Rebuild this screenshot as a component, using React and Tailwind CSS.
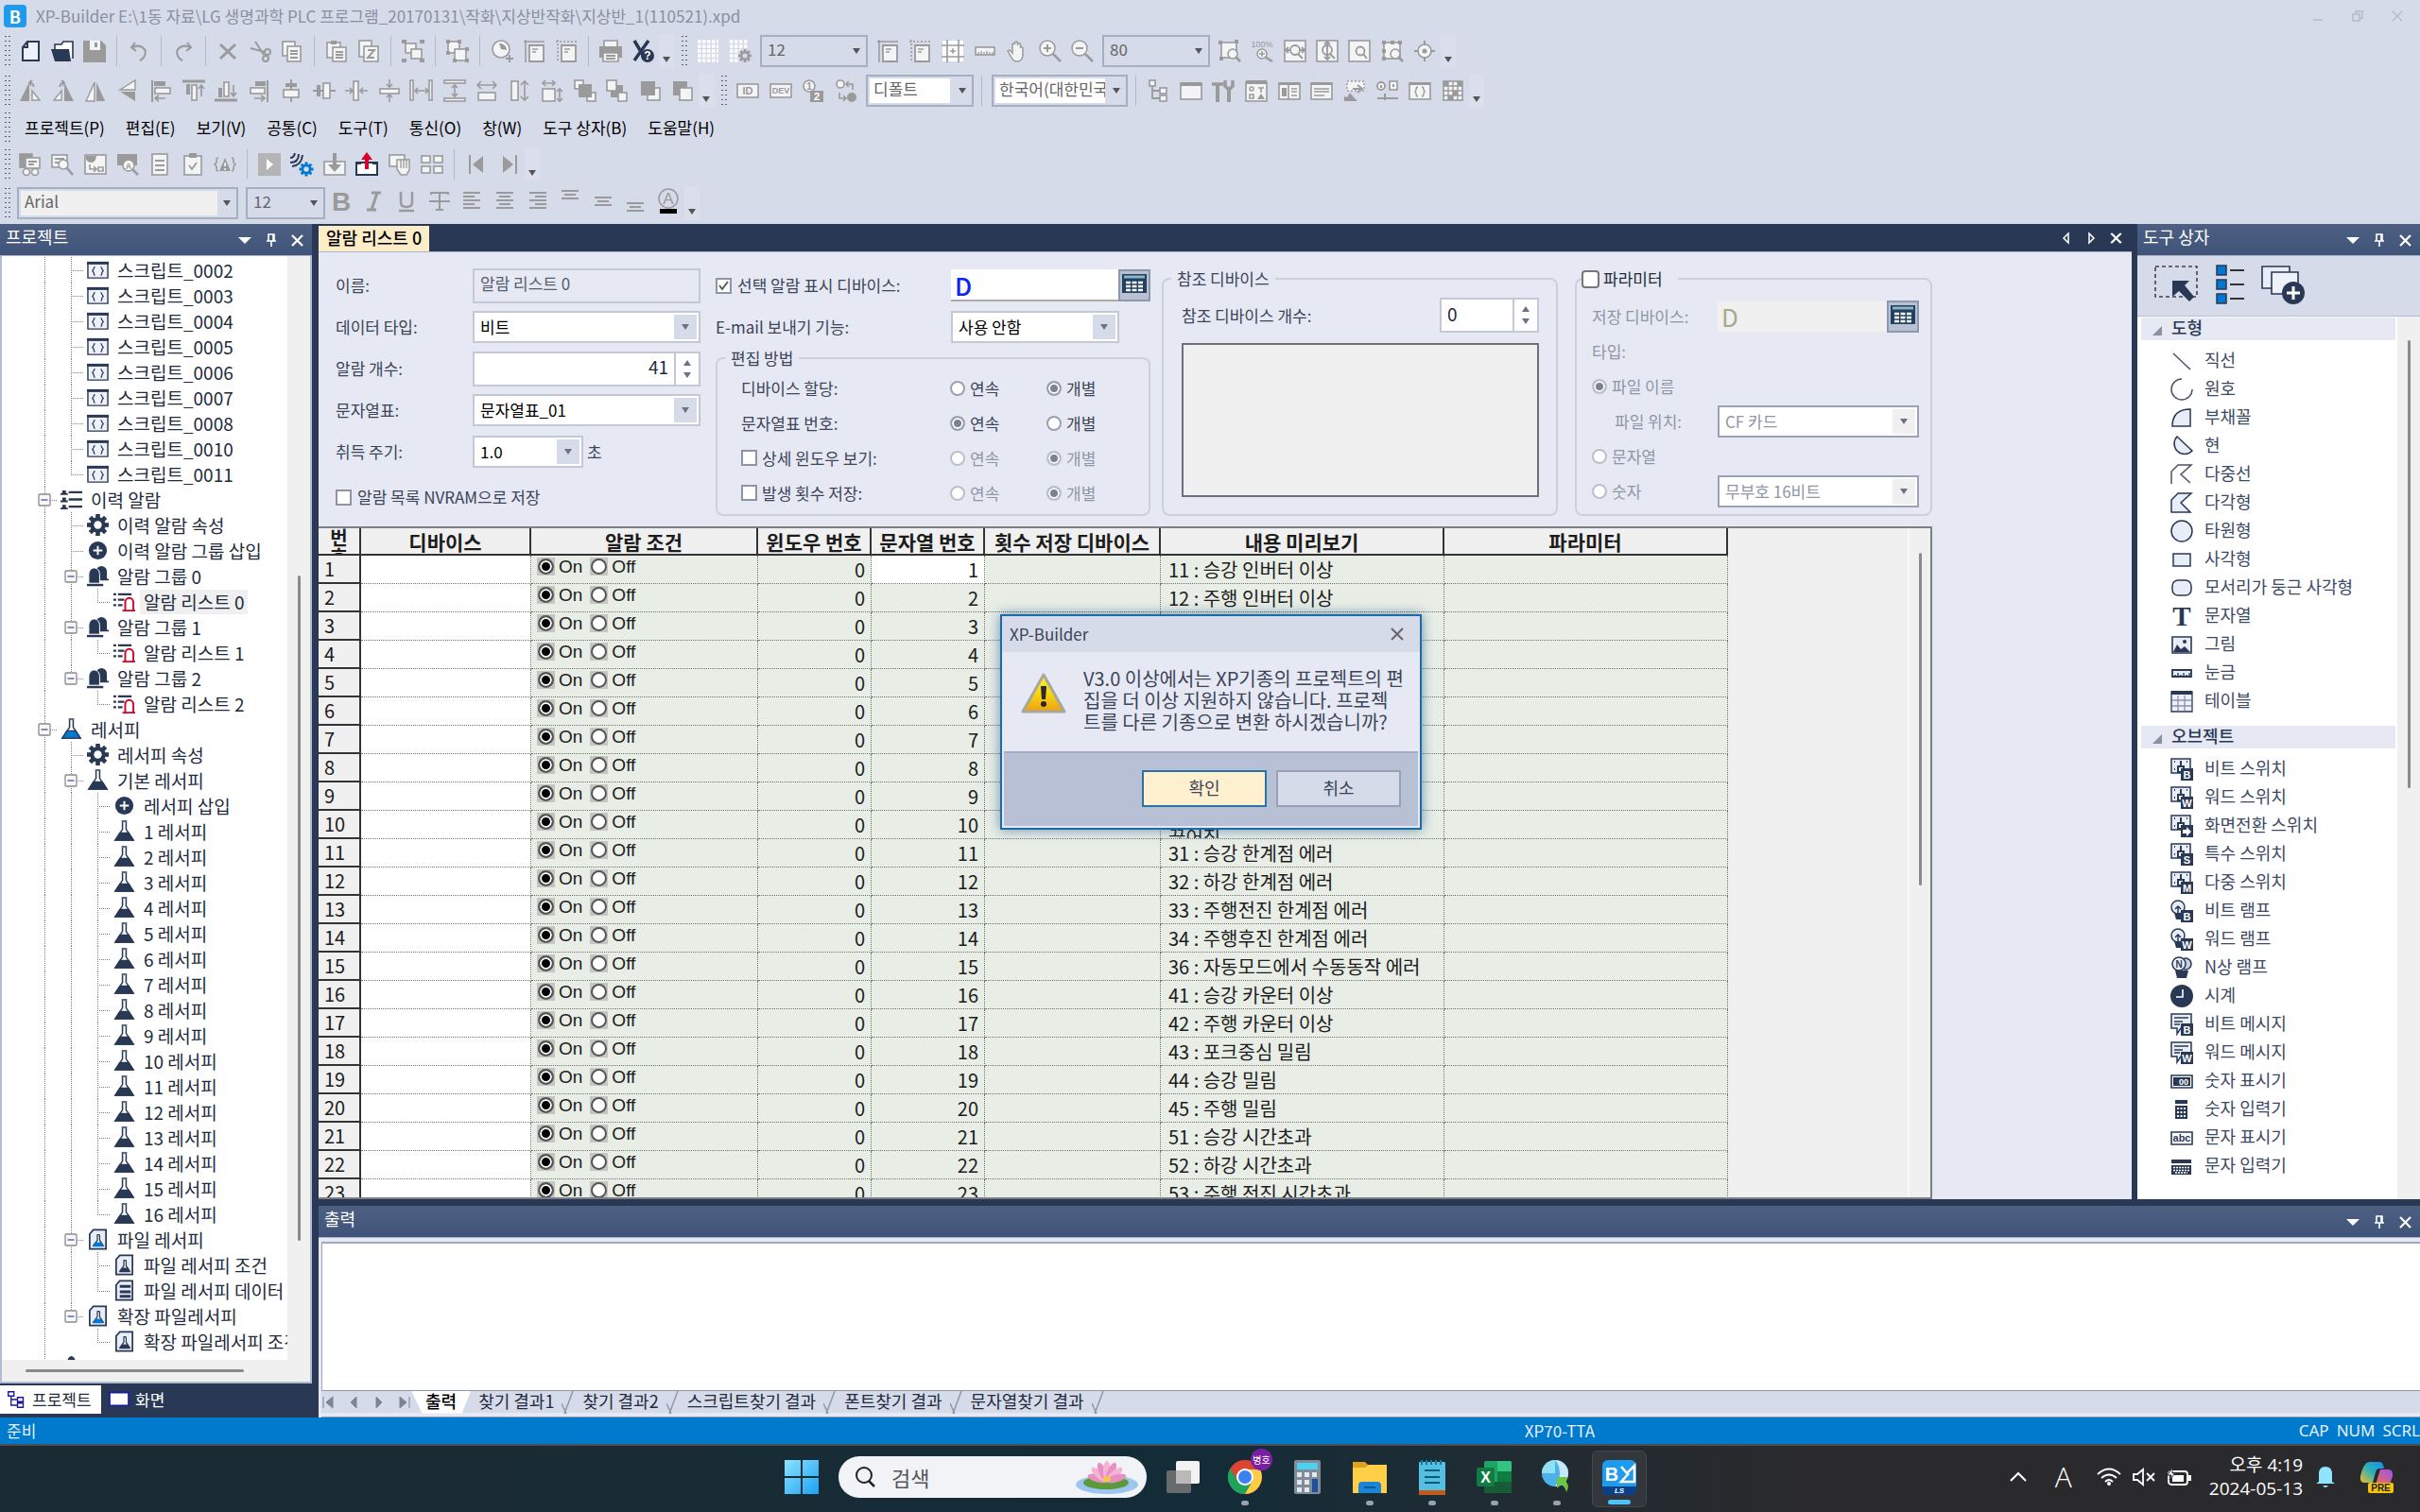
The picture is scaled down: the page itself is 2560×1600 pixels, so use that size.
import React, { useState } from "react";
import { clsx } from "clsx";

const GRAY = "#9a9a9a";
const NAVY = "#293955";
const PALE = "#f3f4f6";

/* ---------- icons ---------- */

const gear = (cx, cy, r, color, hole) => (
  <g>
    {[0, 45, 90, 135].map((a) => (
      <rect
        key={a}
        x={cx - r * 0.2}
        y={cy - r}
        width={r * 0.4}
        height={r * 2}
        fill={color}
        transform={`rotate(${a} ${cx} ${cy})`}
      />
    ))}
    <circle cx={cx} cy={cy} r={r * 0.72} fill={color} />
    <circle cx={cx} cy={cy} r={r * 0.36} fill={hole} />
  </g>
);

const badge = (letter) => (
  <g>
    <rect x="11" y="11" width="13" height="13" fill={NAVY} />
    <text x="17.5" y="22" fontSize="11" fontWeight="700" fill="#fff" textAnchor="middle" fontFamily="Liberation Sans, sans-serif">
      {letter}
    </text>
  </g>
);

const switchBox = (
  <g>
    <rect x="1" y="1" width="20" height="15" fill="#e9edf8" stroke={NAVY} strokeWidth="1.5" />
    <path d="M4 4h1M17 4h1M4 12h1" stroke={NAVY} strokeWidth="2" />
    <path d="M11 3v5M8 9h6v6H8z" stroke={NAVY} strokeWidth="2" fill="#fff" />
  </g>
);

const bulb = (
  <g>
    <circle cx="8" cy="8" r="7" fill="#e9edf8" stroke={NAVY} strokeWidth="1.5" />
    <path d="M8 14V8M5 10l3-3 3 3" stroke={NAVY} strokeWidth="1.5" fill="none" />
    <path d="M4 14h8v7H6z" fill={NAVY} />
  </g>
);

const message = (
  <g>
    <path d="M1 1h21v15H11l-4 6v-6H1z" fill="#e9edf8" stroke={NAVY} strokeWidth="1.5" />
    <path d="M4 5h15M4 9h9M4 12h6" stroke={NAVY} strokeWidth="1.5" />
  </g>
);

const flask = (liquid) => (
  <g>
    <path d="M9 1h6M10 2v8L2 22h20L14 10V2" fill="#fff" stroke={NAVY} strokeWidth="1.6" />
    <path d="M7 14h10l5 8H2z" fill={liquid} stroke={NAVY} strokeWidth="1.2" />
  </g>
);

const docFlask = (liquid) => (
  <g>
    <path d="M7 1.5h14v21H3V6z" fill="#e9edf8" stroke={NAVY} strokeWidth="1.8" />
    <path d="M11 7h3M11.5 7v6L7 19h11l-4-6V7" fill="#fff" stroke={NAVY} strokeWidth="1.3" />
    <path d="M9.5 15h6l3 5h-12z" fill={liquid} />
  </g>
);

const magnifier = (cx, cy, r) => (
  <g>
    <circle cx={cx} cy={cy} r={r} fill={PALE} stroke={GRAY} strokeWidth="1.5" />
    <path d={`M${cx + r * 0.7} ${cy + r * 0.7}L23 23`} stroke={GRAY} strokeWidth="2.5" />
  </g>
);

const rulerBox = (dash) => (
  <g fill="none" stroke={GRAY}>
    <path d="M1 2h22" strokeWidth="1.5" strokeDasharray={dash ? "2 2" : undefined} />
    <path d="M3 0v24" strokeWidth="1.5" strokeDasharray={dash ? "2 2" : undefined} />
    <path d="M7 6h15v17H7z" fill={PALE} strokeWidth="1.8" />
    <path d="M10 10h6M10 13h4" strokeWidth="1.5" />
  </g>
);

const box = (x, y, w, h, fill = PALE) => (
  <rect x={x} y={y} width={w} height={h} fill={fill} stroke={GRAY} strokeWidth="1.6" />
);

const strokes = (d, w = 1.6) => <path d={d} fill="none" stroke={GRAY} strokeWidth={w} />;

const lines = (rows) => (
  <path d={rows.map(([x, y, w]) => `M${x} ${y}h${w}`).join("")} stroke={GRAY} strokeWidth="2" />
);

const label = (t, x, y, size, fill = GRAY) => (
  <text x={x} y={y} fontSize={size} fontWeight="700" fill={fill} textAnchor="middle" fontFamily="Liberation Sans, sans-serif">
    {t}
  </text>
);

const ICONS = {
  new: <path d="M9 2h12v20H4V8z M9 2v6H4" fill="#eef1fa" stroke={NAVY} strokeWidth="2" />,
  open: (
    <g>
      <path d="M4 10V5h7l2-3h10v18" fill="#fff" stroke={NAVY} strokeWidth="1.6" />
      <path d="M0 10h19l2 13H4z" fill={NAVY} />
    </g>
  ),
  save: (
    <g>
      <path d="M0 1h19l5 5v18H0z" fill={GRAY} />
      <path d="M7 1h11v10H7z" fill={PALE} />
      <path d="M12 3h3v5h-3z" fill={GRAY} />
    </g>
  ),
  undo: strokes("M8 3L4 8l5 4M5 8c9-4 16 2 13 9-1 3-3 4-5 5", 2),
  redo: strokes("M16 3l4 5-5 4M19 8C10 4 3 10 6 17c1 3 3 4 5 5", 2),
  del: strokes("M4 5l16 15M20 5L4 20", 3),
  cut: (
    <g>
      {strokes("M7 2l9 14M2 9l15 4", 2)}
      <circle cx="18" cy="20" r="3" fill="none" stroke={GRAY} strokeWidth="2" />
      <circle cx="20" cy="13" r="3" fill="none" stroke={GRAY} strokeWidth="2" />
    </g>
  ),
  copy: (
    <g>
      {box(2, 2, 13, 15)}
      {box(7, 7, 14, 16)}
      {lines([[10, 12, 8], [10, 15, 8], [10, 19, 8]])}
    </g>
  ),
  paste: (
    <g>
      {box(2, 3, 14, 16)}
      <path d="M6 1h6v4H6z" fill={GRAY} />
      {box(8, 8, 14, 15)}
      {lines([[11, 13, 8], [11, 16, 8], [11, 19, 8]])}
    </g>
  ),
  pasteZ: (
    <g>
      {box(2, 1, 13, 17)}
      {box(7, 7, 15, 16)}
      {strokes("M11 11h7l-7 8h7", 2)}
    </g>
  ),
  group: (
    <g>
      {box(4, 4, 11, 10)}
      {box(10, 10, 11, 10)}
      <path d="M0 0h5v4H0zM19 0h5v4h-5zM0 20h5v4H0zM19 20h5v4h-5z" fill={GRAY} />
    </g>
  ),
  ungroup: (
    <g>
      {box(2, 2, 12, 12)}
      {box(9, 10, 12, 12)}
      <path d="M0 0h4v4H0zM12 0h4v4h-4zM0 12h4v4H0zM20 8h4v4h-4zM20 20h4v4h-4zM7 20h4v4H7z" fill={GRAY} />
    </g>
  ),
  find: (
    <g>
      <circle cx="11" cy="10" r="9" fill={PALE} stroke={GRAY} strokeWidth="1.6" />
      <path d="M11 10L9 4a7 7 0 0 1 8 7z" fill={GRAY} />
      {strokes("M20 16v8M16 20h8", 1.8)}
    </g>
  ),
  ruler1: rulerBox(false),
  ruler2: rulerBox(true),
  print: (
    <g>
      <path d="M5 1h14v7H5z" fill={PALE} stroke={GRAY} strokeWidth="1.6" />
      <path d="M0 7h24v12H0z" fill={GRAY} />
      <path d="M4 14h16v9H4z" fill={PALE} stroke={GRAY} strokeWidth="1.6" />
      {lines([[7, 17, 10], [7, 20, 10]])}
    </g>
  ),
  help: (
    <g>
      <path d="M3 1l12 20M18 1L3 22" stroke={NAVY} strokeWidth="3.5" />
      <circle cx="17" cy="17" r="7" fill={NAVY} />
      {label("?", 17, 21, 12, "#fff")}
    </g>
  ),
  grid: (
    <path d="M1 2h22M1 7h22M1 12h22M1 17h22M1 22h22" stroke="#fff" strokeWidth="3.5" strokeDasharray="3.5 1.5" />
  ),
  gridGear: (
    <g>
      <path d="M1 2h20M1 7h20M1 12h12M1 17h9M1 22h9" stroke="#fff" strokeWidth="3.5" strokeDasharray="3.5 1.5" />
      {gear(17, 17, 7, GRAY, "#d6dbe9")}
    </g>
  ),
  guide: (
    <g>
      <path d="M1 1h22v22H1z" fill="#fff" />
      {strokes("M0 6h24M0 18h24M6 0v24M18 0v24")}
      {strokes("M12 9v6M9 12h6", 1.4)}
    </g>
  ),
  rule: (
    <g>
      {box(2, 8, 20, 8)}
      {strokes("M5 16v-3M8 16v-4M11 16v-3M14 16v-4M17 16v-3M20 16v-3", 1.3)}
    </g>
  ),
  hand: (
    <path
      d="M7 14V5q1.5-2 2.5 0V3q1.5-2 3 0v2q2-2 3 0v3q2-1 2.5 1v8q-1 6-6 6-4 0-6-4l-4-7q2-2 5 2z"
      fill={PALE}
      stroke={GRAY}
      strokeWidth="1.5"
    />
  ),
  zoomIn: (
    <g>
      {magnifier(9, 9, 8)}
      {strokes("M9 5v8M5 9h8", 2)}
    </g>
  ),
  zoomOut: (
    <g>
      {magnifier(9, 9, 8)}
      {strokes("M5 9h8", 2)}
    </g>
  ),
  zoomBox: (
    <g>
      {box(3, 3, 16, 16)}
      <path d="M0 1h4v4H0zM17 0h4v4h-4zM1 18h4v4H1z" fill={GRAY} />
      {magnifier(15, 15, 5)}
    </g>
  ),
  zoom100: (
    <g>
      <text x="12" y="8" fontSize="9" fill={GRAY} textAnchor="middle" fontFamily="Liberation Sans, sans-serif">
        100%
      </text>
      {magnifier(12, 15, 5)}
      {strokes("M12 12v6M9 15h6", 1.5)}
    </g>
  ),
  fitW: (
    <g>
      {box(1, 1, 22, 22)}
      <circle cx="12" cy="11" r="5" fill="none" stroke={GRAY} strokeWidth="1.8" />
      {strokes("M15 15l5 5M2 11h6M16 11h6M5 8l-3 3 3 3M19 8l3 3-3 3", 1.8)}
    </g>
  ),
  fitH: (
    <g>
      {box(1, 1, 22, 22)}
      <circle cx="12" cy="11" r="5" fill="none" stroke={GRAY} strokeWidth="1.8" />
      {strokes("M15 15l5 5M12 2v18M9 5l3-3 3 3M9 18l3 3 3-3", 1.8)}
    </g>
  ),
  page: (
    <g>
      {box(1, 1, 22, 22)}
      <circle cx="13" cy="12" r="4.5" fill="none" stroke={GRAY} strokeWidth="1.8" />
      {strokes("M16 15l4 5", 2)}
    </g>
  ),
  selZoom: (
    <g>
      {box(3, 3, 17, 17)}
      <path d="M1 1h4v4H1zM10 1h4v4h-4zM18 1h4v4h-4zM1 10h4v4H1zM1 18h4v4H1z" fill={GRAY} />
      {magnifier(15, 15, 5)}
    </g>
  ),
  target: (
    <g>
      <circle cx="12" cy="12" r="7" fill={PALE} stroke={GRAY} strokeWidth="1.6" />
      <circle cx="12" cy="12" r="2.5" fill={GRAY} />
      {strokes("M12 1v5M12 18v5M1 12h5M18 12h5", 2)}
    </g>
  ),
  rotL: (
    <g>
      <path d="M11 3v20H1z" fill={GRAY} />
      <path d="M14 12v10h8z" fill={PALE} stroke={GRAY} strokeWidth="1.4" />
      {strokes("M16 8q-1-4-4-5M14 1l-3 2 2 4")}
    </g>
  ),
  rotR: (
    <g>
      <path d="M13 3v20h10z" fill={GRAY} />
      <path d="M10 12v10H2z" fill={PALE} stroke={GRAY} strokeWidth="1.4" />
      {strokes("M8 8q1-4 4-5M10 1l3 2-2 4")}
    </g>
  ),
  flipH: (
    <g>
      <path d="M11 3v20H2z" fill={PALE} stroke={GRAY} strokeWidth="1.4" />
      <path d="M13 3v20h9z" fill={GRAY} />
    </g>
  ),
  flipV: (
    <g>
      <path d="M19 1v10H3z" fill={PALE} stroke={GRAY} strokeWidth="1.4" />
      <path d="M19 13v10L3 13z" fill={GRAY} />
    </g>
  ),
  alignL: (
    <g>
      {strokes("M3 1v23", 2)}
      <path d="M5 2h12v5H5z" fill={GRAY} />
      {box(6, 9, 16, 6)}
      {strokes("M6 20h11M10 17l-4 3 4 3")}
    </g>
  ),
  alignT: (
    <g>
      {strokes("M0 2h24", 3)}
      <path d="M4 5h4v11H4z" fill={GRAY} />
      {box(10, 6, 5, 16)}
      {strokes("M20 6v12M17 10l3-4 3 4")}
    </g>
  ),
  alignB: (
    <g>
      {strokes("M0 22h24", 3)}
      <path d="M4 9h4v10H4z" fill={GRAY} />
      {box(10, 3, 5, 15)}
      {strokes("M20 6v12M17 14l3 4 3-4")}
    </g>
  ),
  alignR: (
    <g>
      {strokes("M21 1v23", 2)}
      <path d="M8 2h11v5H8z" fill={GRAY} />
      {box(3, 9, 15, 6)}
      {strokes("M7 20h11M14 17l4 3-4 3")}
    </g>
  ),
  midH: (
    <g>
      {strokes("M12 0v24", 2)}
      <path d="M6 4h12v4H6z" fill={GRAY} />
      {box(4, 11, 16, 8)}
    </g>
  ),
  midV: (
    <g>
      {strokes("M0 12h24", 2)}
      <path d="M4 6h4v12H4z" fill={GRAY} />
      {box(11, 4, 7, 16)}
    </g>
  ),
  inH: (
    <g>
      {box(9, 2, 5, 20)}
      {strokes("M0 12h8M5 9l3 3-3 3M24 12h-8M19 9l-3 3 3 3")}
    </g>
  ),
  inV: (
    <g>
      {box(2, 10, 20, 5)}
      {strokes("M12 0v8M9 5l3 3 3-3M12 24v-8M9 19l3-3 3 3")}
    </g>
  ),
  distH: (
    <g>
      {box(0, 1, 3, 21)}
      {box(20, 1, 3, 21)}
      {strokes("M5 12h13M8 9l-3 3 3 3M16 9l3 3-3 3")}
    </g>
  ),
  distV: (
    <g>
      {box(1, 1, 22, 3)}
      {box(1, 20, 22, 3)}
      {strokes("M12 6v12M9 9l3-3 3 3M9 15l3 3 3-3")}
    </g>
  ),
  sameW: (
    <g>
      {box(3, 14, 18, 8)}
      {strokes("M2 6h20M6 2L2 6l4 4M18 2l4 4-4 4")}
    </g>
  ),
  sameH: (
    <g>
      {box(3, 2, 7, 20)}
      {strokes("M17 2v20M13 6l4-4 4 4M13 18l4 4 4-4")}
    </g>
  ),
  sameSize: (
    <g>
      {box(2, 10, 13, 13)}
      {strokes("M2 4h13M5 1L2 4l3 3M12 1l3 3-3 3M20 10v13M17 13l3-3 3 3M17 20l3 3 3-3")}
    </g>
  ),
  front: (
    <g>
      {box(1, 1, 9, 9)}
      {box(14, 14, 9, 9)}
      <path d="M5 5h14v14H5z" fill={GRAY} />
    </g>
  ),
  back: (
    <g>
      <path d="M5 6h13v13H5z" fill={GRAY} />
      {box(1, 1, 10, 11)}
      {box(13, 14, 9, 9)}
    </g>
  ),
  forward: (
    <g>
      {box(9, 9, 13, 13)}
      <path d="M2 2h15v15H2z" fill={GRAY} />
    </g>
  ),
  backward: (
    <g>
      <path d="M2 2h15v15H2z" fill={GRAY} />
      {box(9, 9, 13, 13)}
    </g>
  ),
  id: (
    <g>
      {box(1, 5, 22, 14)}
      {label("ID", 12, 16, 11)}
    </g>
  ),
  dev: (
    <g>
      {box(1, 5, 22, 14)}
      {label("DEV", 12, 15, 9)}
    </g>
  ),
  oneTwo: (
    <g>
      <circle cx="8" cy="7" r="6" fill={PALE} stroke={GRAY} strokeWidth="1.6" />
      {label("1", 8, 11, 10)}
      <path d="M9 12h14v12H9z" fill={GRAY} />
      {label("2", 16, 22, 11, "#fff")}
    </g>
  ),
  swap: (
    <g>
      <circle cx="6" cy="5" r="4" fill={PALE} stroke={GRAY} strokeWidth="1.6" />
      <circle cx="18" cy="19" r="5" fill={GRAY} />
      {strokes("M13 5h6v6M15 2l-3 3 3 3M5 14v6h6M9 17l3 3-3 3")}
    </g>
  ),
  tree: (
    <g>
      {strokes("M6 6v14h8M6 12h8", 1.8)}
      {box(3, 1, 6, 6)}
      {box(14, 9, 7, 6)}
      {box(14, 17, 7, 6)}
    </g>
  ),
  window: (
    <g>
      {box(1, 4, 22, 17)}
      <path d="M1 3h22v4H1z" fill={GRAY} />
    </g>
  ),
  tools: (
    <g>
      {strokes("M6 6v18M18 12v12", 4)}
      {strokes("M0 5h12M14 1v6l4 4 4-4V1", 3.5)}
    </g>
  ),
  shapes: (
    <g>
      {box(1, 3, 22, 20)}
      <path d="M1 1h22v4H1z" fill={GRAY} />
      <circle cx="7" cy="10" r="2" fill="none" stroke={GRAY} strokeWidth="1.5" />
      {strokes("M14 9h6M17 9v5M5 16h4v4H5z")}
      <path d="M17 15l4 6h-8z" fill={GRAY} />
    </g>
  ),
  props: (
    <g>
      {box(1, 4, 22, 17)}
      <path d="M1 3h22v3H1zM4 9h5v9H4z" fill={GRAY} />
      {strokes("M11 5v16M14 10h6M14 13h6M14 17h6")}
    </g>
  ),
  text: (
    <g>
      {box(1, 4, 22, 17)}
      <path d="M1 3h22v3H1z" fill={GRAY} />
      {strokes("M4 10h16M4 13h16M4 17h11")}
    </g>
  ),
  imgOut: (
    <g>
      <path d="M4 2h18v10H4z" fill={PALE} stroke={GRAY} strokeDasharray="2 2" strokeWidth="1.5" />
      <path d="M1 23v-5l3 1 3-5 4 5 4 4z" fill={GRAY} />
      {strokes("M10 10h8M15 6l5 4-5 4", 2)}
    </g>
  ),
  link: (
    <g>
      <circle cx="5" cy="7" r="4" fill={PALE} stroke={GRAY} strokeWidth="1.8" />
      {box(14, 2, 8, 9)}
      {strokes("M1 20h22M9 15v7M18 5v3M5 6v3", 2)}
    </g>
  ),
  braces: (
    <g>
      {box(1, 4, 22, 17)}
      <path d="M1 3h22v3H1z" fill={GRAY} />
      {strokes("M10 8q-2 0-2 3l-1 2 1 2q0 3 2 3M14 8q2 0 2 3l1 2-1 2q0 3-2 3", 1.4)}
    </g>
  ),
  matrix: (
    <g>
      {box(2, 2, 20, 20)}
      {strokes("M2 7h20M2 12h20M2 17h20M7 2v20M12 2v20M17 2v20", 1.4)}
      <path d="M2 2h5v5H2zM17 2h5v5h-5zM12 12h5v5h-5zM7 17h5v5H7z" fill={GRAY} />
    </g>
  ),
  winFind: (
    <g>
      {box(1, 1, 13, 14, GRAY)}
      {box(7, 5, 15, 11)}
      {lines([[10, 9, 9], [10, 12, 6]])}
      <circle cx="8" cy="20" r="3.5" fill={PALE} stroke={GRAY} strokeWidth="1.6" />
      <circle cx="17" cy="20" r="3.5" fill={PALE} stroke={GRAY} strokeWidth="1.6" />
    </g>
  ),
  listFind: (
    <g>
      {box(1, 2, 16, 13)}
      {lines([[4, 6, 10], [4, 10, 6]])}
      {magnifier(13, 12, 5)}
    </g>
  ),
  preview: (
    <g>
      {box(1, 2, 22, 20)}
      <path d="M2 3h11q-1 7-5 7-5 0-6-4z" fill={GRAY} />
      {strokes("M6 12v5h6M10 14l3 3-3 3M15 15h5v4h-5z", 1.6)}
    </g>
  ),
  textFind: (
    <g>
      <path d="M1 1h21v12H1z" fill={GRAY} />
      {magnifier(13, 13, 6)}
      {label("A", 13, 17, 9)}
    </g>
  ),
  doc: (
    <g>
      {box(4, 1, 16, 22)}
      {lines([[7, 8, 10], [7, 13, 10], [7, 18, 10]])}
    </g>
  ),
  check: (
    <g>
      {box(3, 3, 18, 20)}
      <path d="M8 0h8v5H8z" fill={GRAY} />
      {strokes("M8 13l3 4 5-7", 1.8)}
    </g>
  ),
  warn: (
    <g>
      {strokes("M5 5q-2 0-2 3v2l-2 2 2 2v2q0 3 2 3M19 5q2 0 2 3v2l2 2-2 2v2q0 3-2 3")}
      <path d="M12 5l6 14H6z" fill={GRAY} />
      <path d="M12 10v4M12 16v2" stroke="#fff" strokeWidth="1.5" />
    </g>
  ),
  play: (
    <g>
      <path d="M0 0h24v24H0z" fill="#b4b4b4" />
      <path d="M9 6l7 6-7 6z" fill="#fff" />
    </g>
  ),
  comm: (
    <g>
      <path d="M0 5q4 0 5-5M0 10q9 0 9-9M2 14q10-1 11-12" stroke={NAVY} strokeWidth="2" fill="none" />
      {gear(17, 17, 7.5, "#0078d0", "#d6dbe9")}
    </g>
  ),
  down: (
    <g>
      {box(1, 9, 22, 14)}
      <path d="M10 0h4v12h5l-7 8-7-8h5z" fill={GRAY} />
    </g>
  ),
  up: (
    <g>
      <path d="M1 10h22v13H1z" fill="#fff" stroke={NAVY} strokeWidth="2" />
      <path d="M0 9h6v3H0zM18 9h6v3h-6z" fill={NAVY} />
      <path d="M10 17h4V7h4l-6-8-6 8h4z" fill="#d8002a" />
    </g>
  ),
  cards: (
    <g>
      {box(1, 2, 16, 12)}
      <path d="M9 7h13v11l-3 5h-6l-4-6z" fill={PALE} stroke={GRAY} strokeWidth="1.5" />
      {strokes("M13 7v9M16 7v9M19 7v9", 1.3)}
    </g>
  ),
  tiles: (
    <g>
      {box(1, 3, 9, 7)}
      {box(14, 3, 9, 7)}
      {box(1, 14, 9, 7)}
      {box(14, 14, 9, 7)}
    </g>
  ),
  first: (
    <g>
      {strokes("M5 2v20", 2)}
      <path d="M19 3v18L8 12z" fill={GRAY} />
    </g>
  ),
  last: (
    <g>
      {strokes("M20 2v20", 2)}
      <path d="M6 3v18l11-9z" fill={GRAY} />
    </g>
  ),
  bold: label("B", 12, 22, 28),
  italic: strokes("M9 3h10M4 21h10M15 3L9 21", 3),
  underline: strokes("M6 2v11q0 5 6 5t6-5V2M4 22h16", 2.5),
  strike: strokes("M3 5V3h18v2M12 3v18M8 21h8M1 12h22", 2),
  textL: lines([[3, 3, 18], [3, 7, 12], [3, 11, 18], [3, 15, 12], [3, 19, 18]]),
  textC: lines([[3, 3, 18], [6, 7, 12], [3, 11, 18], [6, 15, 12], [3, 19, 18]]),
  textR: lines([[3, 3, 18], [9, 7, 12], [3, 11, 18], [9, 15, 12], [3, 19, 18]]),
  textT: lines([[3, 1, 18], [6, 5, 12], [3, 9, 18]]),
  textM: lines([[3, 8, 18], [6, 12, 12], [3, 16, 18]]),
  textB: lines([[3, 14, 18], [6, 18, 12], [3, 22, 18]]),
  color: (
    <g>
      <circle cx="12" cy="9" r="10" fill="none" stroke={GRAY} strokeWidth="1.5" />
      <text x="12" y="15" fontSize="17" fill={GRAY} textAnchor="middle" fontFamily="Liberation Sans, sans-serif">
        A
      </text>
      <path d="M3 20h18v5H3z" fill="#000" />
    </g>
  ),

  /* tree icons */
  script: (
    <g>
      <path d="M1 5h22v16H1z" fill="#eef1fa" stroke={NAVY} strokeWidth="1.5" />
      <path d="M0 3h24v3H0z" fill={NAVY} />
      <path d="M9 9q-1.5 0-1.5 2L6 13l1.5 2q0 3 1.500 3M15 9q1.500 0 1.500 2l1.500 2-1.500 2q0 3-1.500 3" fill="none" stroke={NAVY} strokeWidth="1.3" />
    </g>
  ),
  history: (
    <g>
      <path d="M9 4h15M9 12h15M9 20h15" stroke={NAVY} strokeWidth="2.5" />
      <path d="M2 2h4v3H2zM0 5h8v2H0zM2 10h4v3H2zM0 13h8v2H0zM2 18h4v3H2zM0 21h8v2H0z" fill={NAVY} />
    </g>
  ),
  gear: gear(12, 12, 12, NAVY, "#fff"),
  plus: (
    <g>
      <circle cx="12" cy="12" r="10" fill={NAVY} />
      <path d="M12 7v10M7 12h10" stroke="#fff" strokeWidth="2" />
    </g>
  ),
  bell: (
    <g>
      <path d="M10 17V7a6 6 0 0 1 12 0v8h2v2z" fill={NAVY} />
      <path d="M2 20V10a6 7 0 0 1 12 0v10z" fill={NAVY} stroke="#fff" strokeWidth="1" />
      <path d="M0 22h18" stroke={NAVY} strokeWidth="2.5" />
    </g>
  ),
  alarm: (
    <g>
      <path d="M0 4h3M0 10h3M0 16h3M5 4h15M5 10h7M5 16h5" stroke={NAVY} strokeWidth="2.5" />
      <path d="M13 22v-9a4.500 5 0 0 1 9 0v9M10 22h14" fill="#fff" stroke="#d8002a" strokeWidth="2" />
    </g>
  ),
  flaskBlue: flask("#0078d0"),
  flask: flask(NAVY),
  docBlue: docFlask("#0078d0"),
  docNavy: docFlask(NAVY),
  docData: (
    <g>
      <path d="M7 1.5h14v21H3V6z" fill="#e9edf8" stroke={NAVY} strokeWidth="1.8" />
      <path d="M7 6h12v3H7zM7 12h12v3H7zM7 17h12v3H7z" fill={NAVY} />
    </g>
  ),
  tip: <path d="M8 3q4-6 8 0v14H8z" fill={NAVY} />,
  treeNavy: (
    <g fill="#fff" stroke="#1b1b8f" strokeWidth="1.8">
      <path d="M5 6v14h9M5 12h9" fill="none" />
      <path d="M1 1h8v6H1zM14 9h8v6h-8zM14 17h8v6h-8z" />
    </g>
  ),
  screen: <path d="M1 4h22v15H1z" fill="#fff" stroke="#1b1bb0" strokeWidth="2" />,

  /* toolbox shapes */
  line: <path d="M3 4l18 17" stroke="#4a5468" strokeWidth="1.5" />,
  arc: <path d="M12 1a11 11 0 1 0 11 11" fill="none" stroke="#4a5468" strokeWidth="1.5" />,
  fan: <path d="M21 3v18H2Q2 3 21 3z" fill="#e9edf8" stroke={NAVY} strokeWidth="1.5" />,
  chord: <path d="M7 2l16 15A10 10 0 1 1 7 2z" fill="#e9edf8" stroke={NAVY} strokeWidth="1.5" />,
  poly: <path d="M1 22V9l7-7h14L11 12l10 9" fill="none" stroke="#4a5468" strokeWidth="1.5" />,
  polygon: <path d="M1 22V9l7-7h14L11 12l10 10z" fill="#e9edf8" stroke={NAVY} strokeWidth="1.5" />,
  ellipse: <circle cx="12" cy="12" r="11" fill="#e9edf8" stroke={NAVY} strokeWidth="1.5" />,
  rect: <path d="M3 6h18v13H3z" fill="#e9edf8" stroke={NAVY} strokeWidth="1.5" />,
  round: <rect x="2" y="4" width="20" height="16" rx="6" fill="#e9edf8" stroke={NAVY} strokeWidth="1.5" />,
  letterT: (
    <text x="12" y="22" fontSize="29" fontWeight="700" fill={NAVY} textAnchor="middle" fontFamily="Liberation Serif, serif">
      T
    </text>
  ),
  picture: (
    <g>
      <path d="M2 4h20v17H2z" fill="#e9edf8" stroke={NAVY} strokeWidth="1.6" />
      <path d="M3 20l4-8 4 5 4-3 6 6z" fill={NAVY} />
      <circle cx="15" cy="9" r="2" fill={NAVY} />
    </g>
  ),
  scale: (
    <g>
      <path d="M2 9h20v7H2z" fill="#e9edf8" stroke={NAVY} strokeWidth="1.8" />
      <path d="M5 16v-2M8 16v-4M11 16v-2M14 16v-4M17 16v-2M20 16v-4" stroke={NAVY} strokeWidth="1.3" />
    </g>
  ),
  table: (
    <g>
      <path d="M1 2h22v21H1z" fill="#eef1fa" stroke={NAVY} strokeWidth="1.3" />
      <path d="M1 1h22v4H1z" fill={NAVY} />
      <path d="M2 11h20M2 17h20M8 6v16M15 6v16" stroke="#8a93a8" strokeWidth="1.3" />
    </g>
  ),
  swB: <g>{switchBox}{badge("B")}</g>,
  swW: <g>{switchBox}{badge("W")}</g>,
  swArrow: (
    <g>
      {switchBox}
      <path d="M11 11h13v13H11z" fill={NAVY} />
      <path d="M13 16h4v-3l5 5-5 5v-3h-4z" fill="#fff" />
    </g>
  ),
  swS: <g>{switchBox}{badge("S")}</g>,
  swM: <g>{switchBox}{badge("M")}</g>,
  lampB: <g>{bulb}{badge("B")}</g>,
  lampW: <g>{bulb}{badge("W")}</g>,
  lampN: (
    <g>
      <circle cx="16" cy="8" r="6" fill="#c9cfde" stroke={NAVY} strokeWidth="1.5" />
      <circle cx="9" cy="8" r="7" fill="#e9edf8" stroke={NAVY} strokeWidth="1.5" />
      {label("N", 9, 12, 10, NAVY)}
      <path d="M5 15h14l-2 8H7z" fill={NAVY} />
    </g>
  ),
  clock: (
    <g>
      <circle cx="12" cy="12" r="12" fill={NAVY} />
      <path d="M13 5v8H6" stroke="#fff" strokeWidth="1.6" fill="none" />
    </g>
  ),
  msgB: <g>{message}{badge("B")}</g>,
  msgW: <g>{message}{badge("W")}</g>,
  numShow: (
    <g>
      <path d="M1 6h22v13H1z" fill="#fff" stroke={NAVY} strokeWidth="1.6" />
      <path d="M3 8h18v9H3z" fill={NAVY} />
      {label("00", 14, 16, 9, "#fff")}
    </g>
  ),
  numInput: (
    <g>
      <path d="M5 2h13v4H5zM5 8h13v14H5z" fill={NAVY} />
      <path d="M7 11h9M7 15h9M7 19h9" stroke="#fff" strokeWidth="2" strokeDasharray="2 1.5" />
    </g>
  ),
  chrShow: (
    <g>
      <path d="M1 6h22v13H1z" fill="#fff" stroke={NAVY} strokeWidth="1.6" />
      {label("abc", 12, 16, 11, NAVY)}
    </g>
  ),
  chrInput: (
    <g>
      <path d="M1 5h21v4H1zM1 11h21v10H1z" fill={NAVY} />
      <path d="M3 13.5h17M3 16.5h17M5 19h13" stroke="#fff" strokeWidth="1.5" strokeDasharray="2 1" />
    </g>
  ),
};

function Icon({ name, className = "size-6" }) {
  return (
    <svg viewBox="0 0 24 24" className={clsx("shrink-0 overflow-visible", className)} aria-hidden="true">
      {ICONS[name]}
    </svg>
  );
}

/* ---------- toolbars ---------- */

function Grip() {
  return (
    <div className="w-2 h-9 mr-1 shrink-0 bg-[radial-gradient(circle,#5c6370_1px,transparent_1px)] bg-[size:4px_5px]" />
  );
}

function Sep() {
  return <div className="w-px h-8 mx-1.5 shrink-0 bg-[#b3bacb]" />;
}

function Tools({ names, className }) {
  return (
    <div className={clsx("flex shrink-0 justify-between", className)}>
      {names.map((n, i) => (
        <button key={i} type="button" aria-label={n} className="w-[34px] h-9 flex items-center justify-center">
          <Icon name={n} />
        </button>
      ))}
    </div>
  );
}

function More() {
  return (
    <button type="button" aria-label="more" className="w-4 h-9 flex items-end justify-center pb-1.5 shrink-0 bg-[#dbdfec]">
      <Triangle className="text-[#555]" />
    </button>
  );
}

function Triangle({ className, up }) {
  return (
    <svg viewBox="0 0 8 6" className={clsx("w-2 h-1.5 shrink-0", up && "rotate-180", className)} aria-hidden="true">
      <path d="M0 0h8L4 6z" fill="currentColor" />
    </svg>
  );
}

function BarCombo({ name, value, className, white }) {
  return (
    <div className={clsx("relative h-[34px] shrink-0 border-2 border-[#a5afc4] p-0.5", className)}>
      <select
        aria-label={name}
        defaultValue={value}
        className={clsx("appearance-none block h-full pl-1 pb-1 text-[17px] leading-5 text-[#666] outline-none", white || "w-full")}
      >
        <option>{value}</option>
      </select>
      <Triangle className="absolute right-1.5 top-3 text-[#555]" />
    </div>
  );
}

const MENUS = ["프로젝트(P)", "편집(E)", "보기(V)", "공통(C)", "도구(T)", "통신(O)", "창(W)", "도구 상자(B)", "도움말(H)"];

function TopBars() {
  return (
    <header className="bg-[#d6dbe9] shrink-0 pb-px">
      <div className="h-[33px] flex items-center px-1 gap-[10px]">
        <div className="size-6 rounded bg-[#1d9bec] text-white font-bold text-lg leading-6 text-center">B</div>
        <h1 className="flex-1 text-[17px] leading-8 text-[#8990a2] whitespace-pre">
          XP-Builder E:\1동 자료\LG 생명과학 PLC 프로그램_20170131\작화\지상반작화\지상반_1(110521).xpd
        </h1>
        <div className="flex gap-[26px] pr-3 text-[#b4bbca]">
          <WinButton label="minimize" d="M3 12h10" />
          <WinButton label="restore" d="M3 6h7v7H3zM6 6V3h7v7h-3" />
          <WinButton label="close" d="M3 3l10 10M13 3L3 13" />
        </div>
      </div>
      <div className="h-[42px] flex items-center pl-1">
        <Grip />
        <Tools names={["new", "open", "save"]} className="w-[102px] -ml-px" />
        <Sep />
        <Tools names={["undo"]} />
        <Sep />
        <Tools names={["redo"]} />
        <Sep />
        <Tools names={["del", "cut", "copy"]} />
        <Sep />
        <Tools names={["paste", "pasteZ"]} />
        <Sep />
        <Tools names={["group"]} />
        <Sep />
        <Tools names={["ungroup"]} />
        <Sep />
        <Tools names={["find", "ruler1", "ruler2"]} />
        <Sep />
        <Tools names={["print", "help"]} />
        <More />
        <div className="w-[7px]" />
        <Grip />
        <Tools names={["grid", "gridGear"]} />
        <BarCombo name="grid size" value="12" className="w-[114px] ml-1" />
        <Tools names={["ruler1", "ruler2", "guide", "rule", "hand", "zoomIn", "zoomOut"]} className="w-[240px] mx-1" />
        <BarCombo name="zoom" value="80" className="w-[114px]" />
        <Tools names={["zoomBox", "zoom100", "fitW", "fitH", "page", "selZoom", "target"]} className="w-[240px] ml-1" />
        <More />
      </div>
      <div className="h-[42px] flex items-center pl-1">
        <Grip />
        <Tools
          className="w-[724px] -ml-px"
          names={[
            "rotL", "rotR", "flipH", "flipV", "alignL", "alignT", "alignB", "alignR", "midH", "midV", "inH",
            "inV", "distH", "distV", "sameW", "sameH", "sameSize", "front", "back", "forward", "backward",
          ]}
        />
        <More />
        <div className="w-[7px]" />
        <Grip />
        <Tools names={["id", "dev", "oneTwo", "swap"]} className="w-[138px]" />
        <BarCombo name="style" value="디폴트" className="w-[114px] ml-1" white="w-[85px] bg-white" />
        <div className="w-px h-8 ml-2 mr-[10px] shrink-0 bg-[#b3bacb]" />
        <BarCombo name="language" value="한국어(대한민국)" className="w-[144px]" white="w-[116px] bg-white" />
        <div className="w-px h-8 ml-2 mr-1.5 shrink-0 bg-[#b3bacb]" />
        <Tools
          className="w-[346px]"
          names={["tree", "window", "tools", "shapes", "props", "text", "imgOut", "link", "braces", "matrix"]}
        />
        <More />
      </div>
      <nav className="h-9 flex items-center pl-1">
        <Grip />
        <div className="flex gap-[22px] pl-2.5">
          {MENUS.map((m) => (
            <button key={m} type="button" className="text-[17px] leading-6 text-black">
              {m}
            </button>
          ))}
        </div>
      </nav>
      <div className="h-[41px] flex items-center pl-1">
        <Grip />
        <Tools names={["winFind", "listFind", "preview", "textFind", "doc", "check", "warn"]} className="w-[240px] -ml-px" />
        <Sep />
        <Tools names={["play", "comm", "down", "up", "cards", "tiles"]} className="w-[206px]" />
        <Sep />
        <Tools names={["first", "last"]} />
        <More />
      </div>
      <div className="h-[42px] flex items-center pl-1">
        <Grip />
        <BarCombo name="font" value="Arial" className="w-[234px] ml-0.5" white="w-[208px] bg-[#f0f0f0]" />
        <BarCombo name="font size" value="12" className="w-[84px] ml-2" />
        <Tools
          className="w-[380px] mb-1"
          names={["bold", "italic", "underline", "strike", "textL", "textC", "textR", "textT", "textM", "textB", "color"]}
        />
        <More />
      </div>
    </header>
  );
}

function WinButton({ label, d }) {
  return (
    <button type="button" aria-label={label}>
      <svg viewBox="0 0 16 16" className="size-4">
        <path d={d} fill="none" stroke="currentColor" strokeWidth="1.5" />
      </svg>
    </button>
  );
}

/* ---------- docked panels ---------- */

function PanelHeader({ title }) {
  return (
    <div className="h-[34px] shrink-0 flex items-center pl-1.5 pr-2 bg-linear-to-b from-[#4d6082] to-[#40547a] border-b border-[#aab4cb] text-white">
      <h2 className="flex-1 text-[18px] leading-6 pb-2">{title}</h2>
      <div className="flex items-center gap-[14px]">
        <button type="button" aria-label="menu">
          <svg viewBox="0 0 14 14" className="w-[14px]">
            <path d="M0 4h14L7 11z" fill="currentColor" />
          </svg>
        </button>
        <button type="button" aria-label="pin">
          <svg viewBox="0 0 14 14" className="w-[14px]">
            <path d="M4 1h6v7H4zM2 8h10M7 8v6M9 1v7" fill="none" stroke="currentColor" strokeWidth="1.6" />
          </svg>
        </button>
        <button type="button" aria-label="close">
          <svg viewBox="0 0 14 14" className="w-[14px]">
            <path d="M1 2l11 11M12 2L1 13" stroke="currentColor" strokeWidth="2.2" />
          </svg>
        </button>
      </div>
    </div>
  );
}

// cells: v = trunk, t = branch, l = last branch, m / n = the same with a minus box, _ = blank
const TREE = [
  ...["02", "03", "04", "05", "06", "07", "08", "10"].map((n) => ["vt", "script", `스크립트_00${n}`]),
  ["vl", "script", "스크립트_0011"],
  ["m", "history", "이력 알람"],
  ["vt", "gear", "이력 알람 속성"],
  ["vt", "plus", "이력 알람 그룹 삽입"],
  ["vm", "bell", "알람 그룹 0"],
  ["vvl", "alarm", "알람 리스트 0", true],
  ["vm", "bell", "알람 그룹 1"],
  ["vvl", "alarm", "알람 리스트 1"],
  ["vn", "bell", "알람 그룹 2"],
  ["v_l", "alarm", "알람 리스트 2"],
  ["m", "flaskBlue", "레서피"],
  ["vt", "gear", "레서피 속성"],
  ["vm", "flask", "기본 레서피"],
  ["vvt", "plus", "레서피 삽입"],
  ...Array.from({ length: 15 }, (_, i) => ["vvt", "flask", `${i + 1} 레서피`]),
  ["vvl", "flask", "16 레서피"],
  ["vm", "docBlue", "파일 레서피"],
  ["vvt", "docNavy", "파일 레서피 조건"],
  ["vvl", "docData", "파일 레서피 데이터"],
  ["vn", "docBlue", "확장 파일레서피"],
  ["v_l", "docNavy", "확장 파일레서피 조건"],
  ["v", "tip", ""],
];

function TreeCell({ kind }) {
  const end = kind === "l" || kind === "n" ? 14 : 27;
  const boxed = kind === "m" || kind === "n";
  return (
    <svg viewBox="0 0 28 27" className="w-7 h-[27px] shrink-0" aria-hidden="true">
      {kind !== "_" && (
        <path d={`M14.5 0V${end}`} stroke="#7c7c7c" strokeDasharray="1 1" />
      )}
      {kind !== "_" && kind !== "v" && <path d="M14 14.5h14" stroke="#7c7c7c" strokeDasharray="1 1" />}
      {boxed && (
        <g>
          <rect x="8" y="8" width="12" height="12" rx="1" fill="#f8f8f8" stroke="#8a8a8a" strokeWidth="1.3" />
          <path d="M10.5 14h7" stroke="#3f55a0" strokeWidth="1.3" />
        </g>
      )}
    </svg>
  );
}

function ProjectPanel() {
  return (
    <aside className="w-[330px] shrink-0 flex flex-col bg-[#293955]">
      <PanelHeader title="프로젝트" />
      <div className="flex-1 min-h-0 flex flex-col border-x-2 border-b-2 border-[#b4bccf] bg-[#f0f0f0]">
        <div className="flex-1 min-h-0 flex">
          <ul className="flex-1 min-w-0 h-full overflow-hidden bg-white pt-px">
            {TREE.map(([cells, icon, text, selected], i) => (
              <li key={i} className="flex items-center h-[27px] pl-[31px]">
                {cells.split("").map((c, k) => (
                  <TreeCell key={k} kind={c} />
                ))}
                <span className="w-7 flex justify-center shrink-0">
                  <Icon name={icon} className="size-[23px]" />
                </span>
                <span
                  className={clsx(
                    "ml-[3px] px-1 text-[19px] leading-[26px] text-[#222b3d] whitespace-nowrap",
                    selected && "bg-[#f0f0f0]"
                  )}
                >
                  {text}
                </span>
              </li>
            ))}
          </ul>
          <div className="w-6 flex flex-col items-center">
            <div className="h-[338px] shrink-0" />
            <div className="w-[3px] h-[704px] rounded bg-[#8a8a8a]" />
          </div>
        </div>
        <div className="h-[23px] flex items-center pl-[25px]">
          <div className="w-[231px] h-[3px] rounded bg-[#8a8a8a]" />
        </div>
      </div>
      <div className="flex h-9 pb-1 pt-0.5 shrink-0">
        <button type="button" className="w-[107px] flex items-center gap-2 pl-2 bg-white text-[17px] leading-6 text-[#222b3d]">
          <Icon name="treeNavy" className="size-[18px]" />
          프로젝트
        </button>
        <button type="button" className="flex items-center gap-1.5 pl-2 text-[17px] leading-6 text-white">
          <Icon name="screen" className="size-[22px]" />
          화면
        </button>
      </div>
    </aside>
  );
}

/* ---------- alarm form ---------- */

const FIELD = "border-2 border-[#c3c8d6] bg-white outline-none";
const LABEL = "text-[17px] leading-[22px] text-[#3b4458] whitespace-nowrap";
const DIM = "text-[17px] leading-[22px] text-[#8f96a6] whitespace-nowrap";

function Select({ id, value, className, disabled }) {
  return (
    <div className={clsx("relative h-[34px] shrink-0", className)}>
      <select
        id={id}
        defaultValue={value}
        disabled={disabled}
        className={clsx(
          "appearance-none w-full h-full px-1.5 text-[17px] leading-6 outline-none bg-white",
          disabled ? "border-2 border-[#9aa3b5] text-[#8f96a6] opacity-100" : "border-2 border-[#c3c8d6] text-black"
        )}
      >
        <option>{value}</option>
      </select>
      <span
        className={clsx(
          "absolute right-1 inset-y-1 w-6 flex items-center justify-center pointer-events-none text-[#6b7280]",
          disabled ? "bg-[#f0f0f0]" : "bg-[#d6dbe9]"
        )}
      >
        <Triangle />
      </span>
    </div>
  );
}

function Spin({ id, value, className, align }) {
  return (
    <div className={clsx("flex h-[37px] min-w-0", FIELD, className)}>
      <input
        id={id}
        defaultValue={value}
        className={clsx("flex-1 min-w-0 px-1.5 pb-1 text-[19px] leading-6 text-[#222b3d] outline-none", align)}
      />
      <div className="w-[26px] flex flex-col items-center justify-evenly border-l-2 border-[#c3c8d6] text-[#6b7280]">
        <Triangle up />
        <Triangle />
      </div>
    </div>
  );
}

function Check({ text, checked, className = "gap-1.5" }) {
  const [on, setOn] = useState(!!checked);
  return (
    <label className={clsx("flex items-center", className, LABEL)}>
      <span className="relative size-[17px] shrink-0">
        <input
          type="checkbox"
          checked={on}
          onChange={() => setOn(!on)}
          className="appearance-none block size-full border-2 border-[#8d94a3] bg-white"
        />
        {on && (
          <svg viewBox="0 0 17 17" className="absolute inset-0 size-full pointer-events-none">
            <path d="M4 8l3 4 6-8" fill="none" stroke="#555" strokeWidth="1.8" />
          </svg>
        )}
      </span>
      {text}
    </label>
  );
}

function Radio({ name, text, checked, disabled, className }) {
  return (
    <label className={clsx("flex items-center gap-[5px]", className, disabled ? DIM : LABEL)}>
      <input
        type="radio"
        name={name}
        defaultChecked={checked}
        disabled={disabled}
        className={clsx(
          "appearance-none size-4 rounded-full border-2 bg-white checked:bg-[#7a8294] checked:shadow-[inset_0_0_0_2px_#fff]",
          disabled ? "border-[#b9bfcc]" : "border-[#9aa0ad]"
        )}
      />
      {text}
    </label>
  );
}

function Keypad() {
  return (
    <button type="button" aria-label="keypad" className="w-[34px] h-[34px] shrink-0 flex items-center justify-center border-2 border-[#8d97ad] bg-[#b9c1d2]">
      <svg viewBox="0 0 26 26" className="size-[26px]">
        <path d="M0 1h26v20H0z" fill="#1f4260" />
        <path d="M2 4h22" stroke="#8fb3c8" strokeWidth="3" />
        <path d="M4 10h18M4 14h18M4 18h18" stroke="#fff" strokeWidth="2.5" strokeDasharray="5 1.5" />
      </svg>
    </button>
  );
}

const EDIT_ROWS = [
  { text: "디바이스 할당:", first: false },
  { text: "문자열표 번호:", first: true },
  { text: "상세 윈도우 보기:", check: true, disabled: true },
  { text: "발생 횟수 저장:", check: true, disabled: true },
];

function Group({ legend, className, children }) {
  return (
    <fieldset className={clsx("rounded-lg border-2 border-[#cbd0dc]", className)}>
      <legend className="h-[22px] flex items-center">{legend}</legend>
      {children}
    </fieldset>
  );
}

function Row({ id, text, children }) {
  return (
    <div className="h-11 flex items-center">
      <label htmlFor={id} className={clsx(LABEL, "w-[145px] shrink-0")}>
        {text}
      </label>
      {children}
    </div>
  );
}

function AlarmForm() {
  return (
    <form className="flex pl-[18px] pt-[13px] pb-[5px]" onSubmit={(e) => e.preventDefault()}>
      <div className="w-[386px] mr-4">
        <Row id="name" text="이름:">
          <input
            id="name"
            readOnly
            value="알람 리스트 0"
            className="flex-1 min-w-0 h-[37px] pb-1.5 px-1.5 border-2 border-[#c3c8d6] bg-[#e6e9f3] text-[17px] leading-6 text-[#555d70] outline-none"
          />
        </Row>
        <Row id="type" text="데이터 타입:">
          <Select id="type" value="비트" className="flex-1" />
        </Row>
        <Row id="count" text="알람 개수:">
          <Spin id="count" value="41" className="flex-1" align="text-right" />
        </Row>
        <Row id="strings" text="문자열표:">
          <Select id="strings" value="문자열표_01" className="flex-1" />
        </Row>
        <Row id="period" text="취득 주기:">
          <Select id="period" value="1.0" className="w-[117px]" />
          <span className={clsx(LABEL, "ml-1")}>초</span>
        </Row>
        <div className="h-[52px] flex items-center">
          <Check text="알람 목록 NVRAM으로 저장" />
        </div>
      </div>

      <div className="w-[460px] mr-3">
        <div className="h-11 flex items-center">
          <Check text="선택 알람 표시 디바이스:" checked className="w-[249px] gap-1.5" />
          <input
            aria-label="device"
            defaultValue="D"
            className="w-[177px] h-[34px] px-1 bg-white border-b-2 border-[#aaa] text-[26px] leading-8 font-medium text-[#0a24f0] outline-none"
          />
          <Keypad />
        </div>
        <div className="h-11 flex items-center">
          <label htmlFor="mail" className={clsx(LABEL, "w-[249px]")}>E-mail 보내기 기능:</label>
          <Select id="mail" value="사용 안함" className="w-[178px]" />
        </div>
        <Group legend={<span className={clsx(LABEL, "px-1.5")}>편집 방법</span>} className="pl-2 pt-0.5 pb-1">
          {EDIT_ROWS.map((r) => (
            <div key={r.text} className="h-[37px] flex items-center pl-[17px]">
              <div className="w-[221px]">
                {r.check ? <Check text={r.text} className="gap-[5px]" /> : <span className={LABEL}>{r.text}</span>}
              </div>
              <Radio name={r.text} text="연속" checked={r.first} disabled={r.disabled} className="w-[102px]" />
              <Radio name={r.text} text="개별" checked={!r.first} disabled={r.disabled} />
            </div>
          ))}
        </Group>
      </div>

      <Group
        legend={<span className={clsx(LABEL, "px-1.5")}>참조 디바이스</span>}
        className="w-[419px] mr-[18px] mt-1 mb-1.5 px-2"
      >
        <div className="mt-[9px] ml-[11px] mr-[10px] flex items-center justify-between">
          <label htmlFor="refs" className={LABEL}>참조 디바이스 개수:</label>
          <Spin id="refs" value="0" className="w-[105px]" />
        </div>
        <div className="mt-[11px] ml-[11px] mr-[10px] h-[163px] border-2 border-[#6d7078] bg-[#f0f0f0]" />
      </Group>

      <Group
        legend={
          <label className="flex items-center gap-1 pr-4 -ml-[11px] text-[17px] leading-[22px] text-[#222b3d]">
            <input type="checkbox" className="appearance-none size-[19px] rounded border-2 border-[#767676] bg-white" />
            파라미터
          </label>
        }
        className="w-[377px] mt-1 mb-1.5 pl-4 pr-3"
      >
        <div className="h-[37px] mt-[10px] flex items-center">
          <label htmlFor="save" className={clsx(DIM, "w-[133px]")}>저장 디바이스:</label>
          <input
            id="save"
            disabled
            defaultValue="D"
            className="w-[179px] h-8 px-1 bg-[#f0f0f0] text-[26px] leading-8 text-[#aaa88c]"
          />
          <Keypad />
        </div>
        <div className={clsx(DIM, "h-[37px] flex items-center")}>타입:</div>
        <div className="h-[37px] flex items-center">
          <Radio name="param" text="파일 이름" checked disabled />
        </div>
        <div className="h-[37px] flex items-center">
          <label htmlFor="where" className={clsx(DIM, "w-[133px] pl-6")}>파일 위치:</label>
          <Select id="where" value="CF 카드" disabled className="flex-1" />
        </div>
        <div className="h-[37px] flex items-center">
          <Radio name="param" text="문자열" disabled />
        </div>
        <div className="h-[37px] flex items-center">
          <Radio name="param" text="숫자" disabled className="w-[133px]" />
          <Select id="number" value="무부호 16비트" disabled className="flex-1" />
        </div>
      </Group>
    </form>
  );
}

/* ---------- alarm table ---------- */

const PREVIEWS = [
  "11 : 승강 인버터 이상",
  "12 : 주행 인버터 이상",
  "", "", "", "", "", "", "",
  "끊어짐",
  "31 : 승강 한계점 에러",
  "32 : 하강 한계점 에러",
  "33 : 주행전진 한계점 에러",
  "34 : 주행후진 한계점 에러",
  "36 : 자동모드에서 수동동작 에러",
  "41 : 승강 카운터 이상",
  "42 : 주행 카운터 이상",
  "43 : 포크중심 밀림",
  "44 : 승강 밀림",
  "45 : 주행 밀림",
  "51 : 승강 시간초과",
  "52 : 하강 시간초과",
  "53 : 주행 전진 시간초과",
];

const HEADS = ["디바이스", "알람 조건", "윈도우 번호", "문자열 번호", "횟수 저장 디바이스", "내용 미리보기", "파라미터"];

const CELL = "border-r border-b border-dotted border-[#6d736d] bg-[#e8ede6] px-1.5";

const COND_RADIO =
  "appearance-none block size-[17px] rounded-full border-2 border-[#555] bg-white checked:bg-black checked:shadow-[inset_0_0_0_2px_#fff]";

function OnOff({ row }) {
  return (
    <div className="flex items-center pb-1.5 font-['Liberation_Sans',sans-serif] text-[19px] leading-[22px]">
      <label className="flex items-center gap-1 mr-2">
        <span className="bg-[#c4c6c2] p-px">
          <input type="radio" name={`cond${row}`} defaultChecked className={COND_RADIO} />
        </span>
        On
      </label>
      <label className="flex items-center gap-1">
        <span className="bg-[#c4c6c2] p-px">
          <input type="radio" name={`cond${row}`} className={COND_RADIO} />
        </span>
        Off
      </label>
    </div>
  );
}

function AlarmTable() {
  return (
    <div className="flex-1 min-h-0 flex border-2 border-l-0 border-[#7b7e84] bg-[#f0f0f0] overflow-hidden">
      <table className="w-[1491px] table-fixed border-separate border-spacing-0 text-[20px] leading-[22px] text-[#1c1c1c] self-start">
        <colgroup>
          <col className="w-[45px]" />
          <col className="w-[180px]" />
          <col className="w-[240px]" />
          <col className="w-[120px]" />
          <col className="w-[120px]" />
          <col className="w-[186px]" />
          <col className="w-[300px]" />
          <col className="w-[300px]" />
        </colgroup>
        <thead>
          <tr>
            <th className="p-0 border-r-2 border-b-2 border-[#333]">
              <div className="h-[27px] overflow-hidden leading-[20px] px-2">번호</div>
            </th>
            {HEADS.map((h) => (
              <th key={h} className="p-0 h-[29px] border-r-2 border-b-2 border-[#333] text-[21px] font-bold whitespace-nowrap">
                {h}
              </th>
            ))}
          </tr>
        </thead>
        <tbody>
          {PREVIEWS.map((text, i) => (
            <tr key={i} className="h-[30px]">
              <th scope="row" className="h-[30px] p-0 pl-1.5 text-left font-normal bg-[#f0f0f0] border-r-2 border-b-2 border-[#333]">
                {i + 1}
              </th>
              <td className={clsx(CELL, "!bg-white")} />
              <td className={clsx(CELL, "py-0")}>
                <OnOff row={i} />
              </td>
              <td className={clsx(CELL, "py-0 text-right")}>0</td>
              <td className={clsx(CELL, "py-0 text-right", i === 0 && "!bg-white")}>{i + 1}</td>
              <td className={CELL} />
              <td className={clsx(CELL, "py-0 pl-2 whitespace-nowrap")}>
                <div className={clsx("h-[29px] overflow-hidden", i === 9 ? "pt-[17px]" : "pt-1")}>{text}</div>
              </td>
              <td className={CELL} />
            </tr>
          ))}
        </tbody>
      </table>
      <div className="flex-1" />
      <div className="w-6 flex justify-center pt-[26px] border-l-2 border-[#f8f8f8]">
        <div className="w-[3px] h-[352px] rounded bg-[#8a8a8a]" />
      </div>
    </div>
  );
}

function Editor() {
  return (
    <main className="flex-1 min-w-0 flex flex-col">
      <div className="h-[30px] shrink-0 flex items-end justify-between pr-[9px] border-b border-[#aab4cb]">
        <button type="button" className="h-[27px] px-2 pb-1 bg-[#fdecc8] text-[18px] leading-6 font-medium text-black">
          알람 리스트 0
        </button>
        <div className="flex gap-[10px] h-full items-center text-white">
          <WinButton label="previous tab" d="M10 3v10L5 8z" />
          <WinButton label="next tab" d="M6 3v10l5-5z" />
          <WinButton label="close tab" d="M3 3l10 10M13 3L3 13M4 3l10 10M14 3L4 13" />
        </div>
      </div>
      <div className="flex-1 min-h-0 bg-[#e6e9f3] flex">
        <div className="w-fit flex flex-col min-h-0">
          <AlarmForm />
          <AlarmTable />
        </div>
      </div>
    </main>
  );
}

/* ---------- toolbox ---------- */

const SHAPES = [
  ["line", "직선"], ["arc", "원호"], ["fan", "부채꼴"], ["chord", "현"], ["poly", "다중선"],
  ["polygon", "다각형"], ["ellipse", "타원형"], ["rect", "사각형"], ["round", "모서리가 둥근 사각형"],
  ["letterT", "문자열"], ["picture", "그림"], ["scale", "눈금"], ["table", "테이블"],
];

const OBJECTS = [
  ["swB", "비트 스위치"], ["swW", "워드 스위치"], ["swArrow", "화면전환 스위치"], ["swS", "특수 스위치"],
  ["swM", "다중 스위치"], ["lampB", "비트 램프"], ["lampW", "워드 램프"], ["lampN", "N상 램프"],
  ["clock", "시계"], ["msgB", "비트 메시지"], ["msgW", "워드 메시지"], ["numShow", "숫자 표시기"],
  ["numInput", "숫자 입력기"], ["chrShow", "문자 표시기"], ["chrInput", "문자 입력기"],
];

function ToolSection({ title, items }) {
  return (
    <section>
      <h3 className="h-6 flex items-center gap-[10px] pl-3 bg-[#e6e9f3] text-[18px] leading-6 font-medium text-[#293955]">
        <svg viewBox="0 0 10 10" className="size-[10px] mt-1">
          <path d="M10 0v10H0z" fill="#8a90a0" />
        </svg>
        <span className="pb-1">{title}</span>
      </h3>
      <ul className="py-[7px]">
        {items.map(([icon, text]) => (
          <li key={text} className="h-[30px] flex items-center gap-3 pl-[31px] text-[18px] leading-6 text-[#3d4965]">
            <Icon name={icon} />
            <span className="pb-1">{text}</span>
          </li>
        ))}
      </ul>
    </section>
  );
}

function Toolbox() {
  return (
    <aside className="w-[299px] shrink-0 flex flex-col">
      <PanelHeader title="도구 상자" />
      <div className="h-16 shrink-0 flex items-center gap-[18px] pl-[17px] pb-1 bg-[#d6dbe9] border-b border-[#b4bccf]">
        <svg viewBox="0 0 48 42" className="w-[48px]">
          <path d="M2 2h44v32H2z" fill="none" stroke="#444" strokeWidth="1.6" strokeDasharray="4 3" />
          <path d="M20 17h18l-5 5 10 12-5 5-11-11-7 6z" fill={NAVY} />
        </svg>
        <svg viewBox="0 0 30 42" className="w-[30px]">
          <path d="M1 1h10v10H1zM1 16h10v10H1zM1 31h10v10H1z" fill="#0078d0" stroke={NAVY} strokeWidth="1.5" />
          <path d="M15 6h15M15 21h15M15 36h15" stroke="#333" strokeWidth="1.8" />
        </svg>
        <svg viewBox="0 0 48 42" className="w-[48px]">
          <path d="M1 2h29v23H1z" fill="#e9edf8" stroke={NAVY} strokeWidth="1.6" />
          <path d="M11 8h28v23H11z" fill="#eef1fa" stroke={NAVY} strokeWidth="1.6" />
          <circle cx="34" cy="30" r="12" fill={NAVY} />
          <path d="M34 23v14M27 30h14" stroke="#fff" strokeWidth="3" />
        </svg>
      </div>
      <div className="flex-1 min-h-0 flex bg-white overflow-hidden">
        <div className="flex-1 pl-1 pr-[2px] pt-px flex flex-col gap-1">
          <ToolSection title="도형" items={SHAPES} />
          <ToolSection title="오브젝트" items={OBJECTS} />
        </div>
        <div className="w-6 flex justify-center pt-[25px] bg-[#f0f0f0]">
          <div className="w-[3px] h-[474px] rounded bg-[#8a8a8a]" />
        </div>
      </div>
    </aside>
  );
}

/* ---------- output ---------- */

const RESULT_TABS = ["찾기 결과1", "찾기 결과2", "스크립트찾기 결과", "폰트찾기 결과", "문자열찾기 결과"];

function Slant() {
  return (
    <svg viewBox="0 0 14 24" className="w-[14px] h-6 shrink-0" aria-hidden="true">
      <path d="M3 24L12 0M0 13l5 11" stroke="#8d97ad" strokeWidth="1.5" fill="none" />
    </svg>
  );
}

function Output() {
  return (
    <section className="shrink-0 pt-[7px] flex flex-col">
      <PanelHeader title="출력" />
      <div className="bg-[#e6e9f3] pl-[3px] pt-1">
        <div className="h-[157px] bg-white border-l border-t-2 border-[#a0a8bb]" />
        <div className="h-6 flex items-center bg-[#d6dbe9] border-t border-[#8d97ad]">
          <div className="flex items-center w-[95px] justify-between text-[#7d8494]">
            {["M2 2v12M12 2v12L5 8z", "M11 2v12L5 8z", "M5 2v12l6-6z", "M14 2v12M4 2v12l7-6z"].map((d) => (
              <button key={d} type="button" aria-label="scroll tabs">
                <svg viewBox="0 0 16 16" className="size-4">
                  <path d={d} fill="currentColor" stroke="currentColor" />
                </svg>
              </button>
            ))}
          </div>
          <button type="button" className="h-6 px-[15px] text-[18px] leading-[20px] pb-1 font-medium text-black bg-white [clip-path:polygon(0_0,100%_0,85%_100%,18%_100%)]">
            출력
          </button>
          {RESULT_TABS.map((t, i) => (
            <React.Fragment key={t}>
              {i > 0 && <Slant />}
              <button type="button" className="h-6 px-2 pb-1 text-[18px] leading-[20px] text-[#222b3d]">
                {t}
              </button>
            </React.Fragment>
          ))}
          <Slant />
        </div>
        <div className="h-[5px] border-b border-[#8d97ad]" />
      </div>
    </section>
  );
}

/* ---------- dialog ---------- */

function Dialog() {
  return (
    <div className="absolute inset-0 flex items-center justify-center pl-0.5 pointer-events-none">
      <div
        role="dialog"
        aria-label="XP-Builder"
        className="w-[446px] pointer-events-auto border-2 border-[#1c6ba6] bg-[#e6e9f3] shadow-[0_0_12px_rgba(20,80,130,0.6)]"
      >
        <div className="h-[38px] flex items-center justify-between bg-[#d6dbe9] pl-2 pr-[17px]">
          <h2 className="text-[17px] leading-6 text-[#3b4458]">XP-Builder</h2>
          <button type="button" aria-label="close" className="text-[#666]">
            <svg viewBox="0 0 14 14" className="w-[14px]">
              <path d="M1 1l12 12M13 1L1 13" stroke="currentColor" strokeWidth="2" />
            </svg>
          </button>
        </div>
        <div className="flex items-start gap-[18px] pl-5 pt-4 h-[105px]">
          <svg viewBox="0 0 48 44" className="w-12 mt-1.5 shrink-0">
            <defs>
              <linearGradient id="warn" x1="0" y1="0" x2="0" y2="1">
                <stop offset="0" stopColor="#f7ee3a" />
                <stop offset="0.5" stopColor="#f6d80f" />
                <stop offset="1" stopColor="#eda012" />
              </linearGradient>
            </defs>
            <path d="M24 2L46 41H2z" fill="url(#warn)" stroke="#a7a79f" strokeWidth="3" strokeLinejoin="round" />
            <path d="M21 14h6l-1 14h-4z" fill="#2a2a2a" />
            <circle cx="24" cy="33" r="3" fill="#2a2a2a" />
          </svg>
          <p className="text-[20px] leading-[23px] text-[#3b4458] whitespace-nowrap">
            V3.0 이상에서는 XP기종의 프로젝트의 편
            <br />
            집을 더 이상 지원하지 않습니다. 프로젝
            <br />
            트를 다른 기종으로 변환 하시겠습니까?
          </p>
        </div>
        <div className="mx-0.5 mb-0.5 h-[79px] flex justify-end items-center gap-[10px] pr-[18px] pb-0.5 bg-[#b8c0d6] border-t-2 border-[#a3abc0]">
          <button type="button" className="w-[132px] h-[39px] pb-1 border-2 border-[#2b72a4] bg-[#fff0d0] text-[18px] leading-6 text-[#3b4458]">
            확인
          </button>
          <button type="button" className="w-[132px] h-[39px] pb-1 border-2 border-[#97a0b8] bg-[#d6dbe9] text-[18px] leading-6 text-[#3b4458]">
            취소
          </button>
        </div>
      </div>
    </div>
  );
}

/* ---------- taskbar ---------- */

const APPS = {
  tasks: (
    <g>
      <rect x="13" y="3" width="25" height="24" rx="2" fill="#f2f2f2" />
      <rect x="3" y="13" width="26" height="24" rx="2" fill="#777" opacity="0.85" />
      <rect x="13" y="13" width="16" height="14" fill="#b9b9b9" />
    </g>
  ),
  chrome: (
    <g>
      <circle cx="20" cy="20" r="18" fill="#dd4433" />
      <path d="M4.4 11A18 18 0 0 0 20 38l8-14-8-4-8 4z" fill="#1ca45c" />
      <path d="M20 38A18 18 0 0 0 36 12H20l8 12z" fill="#ffce44" />
      <circle cx="20" cy="20" r="9" fill="#fff" />
      <circle cx="20" cy="20" r="7" fill="#3b82f0" />
    </g>
  ),
  calc: (
    <g>
      <rect x="6" y="2" width="28" height="36" rx="2" fill="#7f8c99" />
      <rect x="9" y="5" width="22" height="7" fill="#4fd0f0" />
      <path d="M9 15h5v5H9zM17 15h5v5h-5zM25 15h5v5h-5zM9 23h5v5H9zM17 23h5v5h-5zM9 31h5v5H9zM17 31h5v5h-5z" fill="#e4e8ec" />
      <path d="M25 22h6v14h-6z" fill="#1d4f9c" />
    </g>
  ),
  folder: (
    <g>
      <path d="M2 4h13l4 4h19v14H2z" fill="#e0a020" />
      <path d="M2 10h13l4-3h19v30H2z" fill="#ffcf48" />
      <path d="M8 37V29q0-4 4-4h16q4 0 4 4v8z" fill="#1b84d6" />
      <path d="M14 31h12" stroke="#0b5a9e" strokeWidth="2" />
    </g>
  ),
  notepad: (
    <g>
      <rect x="6" y="4" width="28" height="31" rx="1" fill="#54bfe0" />
      <path d="M6 34h28v5H6z" fill="#c25a1e" />
      <path d="M12 13h16M12 20h16M12 26h16" stroke="#0a5a80" strokeWidth="2" />
      <path d="M9 2v5M14 2v5M19 2v5M24 2v5M29 2v5" stroke="#1a7ba0" strokeWidth="2" />
    </g>
  ),
  excel: (
    <g>
      <rect x="9" y="3" width="29" height="34" rx="2" fill="#21a366" />
      <path d="M23 3h13q2 0 2 2v9H23z" fill="#33c481" />
      <path d="M23 14h15v11H23z" fill="#107c41" />
      <path d="M9 25h29v10q0 2-2 2H11q-2 0-2-2z" fill="#185c37" />
      <rect x="1" y="10" width="19" height="20" rx="2" fill="#107c41" />
      <text x="10.5" y="26" fontSize="16" fontWeight="700" fill="#fff" textAnchor="middle" fontFamily="Liberation Sans, sans-serif">
        X
      </text>
    </g>
  ),
  globe: (
    <g>
      <circle cx="18" cy="16" r="14" fill="#4db2ec" />
      <path d="M18 2a14 14 0 0 1 0 28q5-6 5-14t-5-14z" fill="#c6e8fa" />
      <path d="M4 16h14V2A14 14 0 0 0 4 16z" fill="#8fe0f0" />
      <path d="M20 20h12l-3 4q5 5 1 12-1-6-6-8l-4 4z" fill="#6cc644" />
    </g>
  ),
  builder: (
    <g>
      <rect x="2" y="1" width="36" height="37" rx="6" fill="#1d9bec" />
      <path d="M2 29h36v3q0 6-6 6H8q-6 0-6-6z" fill="#0b3f8a" />
      <text x="12" y="23" fontSize="20" fontWeight="700" fill="#fff" textAnchor="middle" fontFamily="Liberation Sans, sans-serif">
        B
      </text>
      <path d="M22 8l6 7 8-8v17H22l8-9" fill="none" stroke="#fff" strokeWidth="2.5" />
      <text x="20" y="36" fontSize="8" fontWeight="700" fontStyle="italic" fill="#fff" textAnchor="middle" fontFamily="Liberation Sans, sans-serif">
        LS
      </text>
    </g>
  ),
};

function Taskbar() {
  return (
    <footer className="h-[72px] shrink-0 flex items-center border-t-2 border-[#4b4f54] bg-linear-to-r from-[#1a2b33] from-20% via-[#132c38] via-50% to-[#2a2a2c] to-75%">
      <div className="flex-1 pl-11" />
      <div className="flex items-center">
        <button type="button" aria-label="start" className="w-[36px] mr-[21px] mb-1">
          <svg viewBox="0 0 36 36">
            <defs>
              <linearGradient id="win" x1="0" y1="0" x2="1" y2="1">
                <stop offset="0" stopColor="#8be3ff" />
                <stop offset="1" stopColor="#1ca2f2" />
              </linearGradient>
            </defs>
            <path d="M0 0h17v17H0zM19 0h17v17H19zM0 19h17v17H0zM19 19h17v17H19z" fill="url(#win)" />
          </svg>
        </button>
        <label className="w-[326px] h-11 mb-1 rounded-full bg-[#f1f3f6] flex items-center pl-4 overflow-hidden">
          <svg viewBox="0 0 24 24" className="size-6 shrink-0">
            <circle cx="11" cy="10" r="8" fill="none" stroke="#222" strokeWidth="2" />
            <path d="M16 16l6 6" stroke="#222" strokeWidth="2.5" />
          </svg>
          <input
            aria-label="search"
            defaultValue="검색"
            className="flex-1 min-w-0 ml-4 bg-transparent text-[22px] leading-8 text-[#555] outline-none"
          />
          <svg viewBox="0 0 68 36" className="w-[68px] shrink-0 mr-2">
            <ellipse cx="34" cy="26" rx="33" ry="10" fill="#9cc6f0" />
            <ellipse cx="33" cy="24" rx="24" ry="7" fill="#5a9a3a" />
            {[-75, -50, -25, 0, 25, 50, 75].map((a) => (
              <ellipse
                key={a}
                cx="34"
                cy="12"
                rx="4"
                ry="11"
                fill={a % 50 ? "#e890c0" : "#f3b4d6"}
                transform={`rotate(${a} 34 22)`}
              />
            ))}
            <ellipse cx="34" cy="20" rx="4" ry="3" fill="#f6c944" />
          </svg>
        </label>
        <div className="flex ml-[5px]">
          {Object.keys(APPS).map((k) => (
            <button
              key={k}
              type="button"
              aria-label={k}
              className={clsx(
                "relative w-[58px] h-[60px] mx-1 rounded-md flex flex-col items-center pt-2",
                k === "builder" && "bg-[#33373c] border border-[#45494f]"
              )}
            >
              <svg viewBox="0 0 40 40" className="size-10">
                {APPS[k]}
              </svg>
              {k === "chrome" && (
                <span className="absolute right-0 -top-0.5 size-[23px] rounded-full bg-[#7b1fa2] text-white text-[10px] leading-[23px] text-center">
                  병호
                </span>
              )}
              {!["tasks", "calc"].includes(k) && (
                <span
                  className={clsx(
                    "absolute bottom-0.5 h-[5px] rounded-full",
                    k === "builder" ? "w-6 bg-[#4cc2ff]" : "w-2 bg-[#9aa3ab]"
                  )}
                />
              )}
            </button>
          ))}
        </div>
      </div>
      <div className="flex-1 flex items-center justify-end pr-[28px] pb-1 text-white">
        <svg viewBox="0 0 18 18" className="w-[18px] mr-[30px]">
          <path d="M1 13l8-8 8 8" fill="none" stroke="currentColor" strokeWidth="2" />
        </svg>
        <span className="font-['Open_Sans',sans-serif] font-light text-[30px] leading-8 mr-[26px]">A</span>
        <svg viewBox="0 0 26 20" className="w-[26px] mr-3">
          <path d="M1 7q12-11 24 0M5 11q8-7 16 0M9 15q4-4 8 0" fill="none" stroke="currentColor" strokeWidth="1.8" />
          <circle cx="13" cy="17" r="2" fill="currentColor" />
        </svg>
        <svg viewBox="0 0 24 20" className="w-6 mr-3">
          <path d="M1 7h4l6-5v16l-6-5H1zM15 6l8 8M23 6l-8 8" fill="none" stroke="currentColor" strokeWidth="1.8" />
        </svg>
        <svg viewBox="0 0 26 20" className="w-[26px] mr-[19px]">
          <rect x="2" y="4" width="20" height="14" rx="3" fill="none" stroke="currentColor" strokeWidth="1.8" />
          <path d="M6 8h12v7H6zM23 8h3v6h-3z" fill="currentColor" />
          <path d="M6 0L1 8h4l-2 5 6-7H6z" fill="currentColor" stroke="#2a2a2c" />
        </svg>
        <div className="text-right text-[19px] leading-[25px] mr-[14px] font-['Open_Sans','Noto_Sans_CJK_KR',sans-serif]">
          <div>오후 4:19</div>
          <div>2024-05-13</div>
        </div>
        <svg viewBox="0 0 20 24" className="w-5 mr-[26px]">
          <path d="M3 17V9q0-8 7-8t7 8v8l3 2H0z" fill="#8fe4ff" />
          <path d="M7 21h6q-3 4-6 0z" fill="#8fe4ff" />
        </svg>
        <svg viewBox="0 0 36 36" className="w-9">
          <defs>
            <linearGradient id="cpA" x1="1" y1="0" x2="0" y2="1">
              <stop offset="0" stopColor="#1590f0" />
              <stop offset="0.5" stopColor="#2fb0b8" />
              <stop offset="1" stopColor="#f0c020" />
            </linearGradient>
            <linearGradient id="cpB" x1="1" y1="0" x2="0" y2="1">
              <stop offset="0" stopColor="#9a50f0" />
              <stop offset="1" stopColor="#f07050" />
            </linearGradient>
          </defs>
          <path d="M10 2h12q3 1 4 7h-5q-3 0-4 4l-3 11H5q-5 0-4-7Q4 3 10 2z" fill="url(#cpA)" />
          <path d="M22 10h9q5 1 4 7l-3 9H17z" fill="url(#cpB)" />
          <rect x="9" y="24" width="27" height="11" rx="2" fill="#f7c20c" />
          {label("PRE", 22.5, 33, 10, "#222")}
        </svg>
      </div>
    </footer>
  );
}

export default function App() {
  return (
    <div className="h-screen flex flex-col overflow-hidden font-['Noto_Sans_CJK_KR',sans-serif]">
      <div className="relative flex-1 min-h-0 flex flex-col">
        <TopBars />
        <div className="flex-1 min-h-0 flex gap-[7px] bg-[#293955]">
          <ProjectPanel />
          <div className="flex-1 min-w-0 flex flex-col">
            <div className="flex-1 min-h-0 flex gap-1.5">
              <Editor />
              <Toolbox />
            </div>
            <Output />
          </div>
        </div>
        <div className="h-7 shrink-0 flex items-center bg-[#007acc] text-[17px] leading-6 text-[#e4f0fa]">
          <span className="w-[63%] pl-[7px]">준비</span>
          <span className="flex-1">XP70-TTA</span>
          <span className="flex gap-2 font-['Noto_Sans',sans-serif]">
            <span>CAP</span>
            <span>NUM</span>
            <span>SCRL</span>
          </span>
        </div>
        <Dialog />
      </div>
      <Taskbar />
    </div>
  );
}
